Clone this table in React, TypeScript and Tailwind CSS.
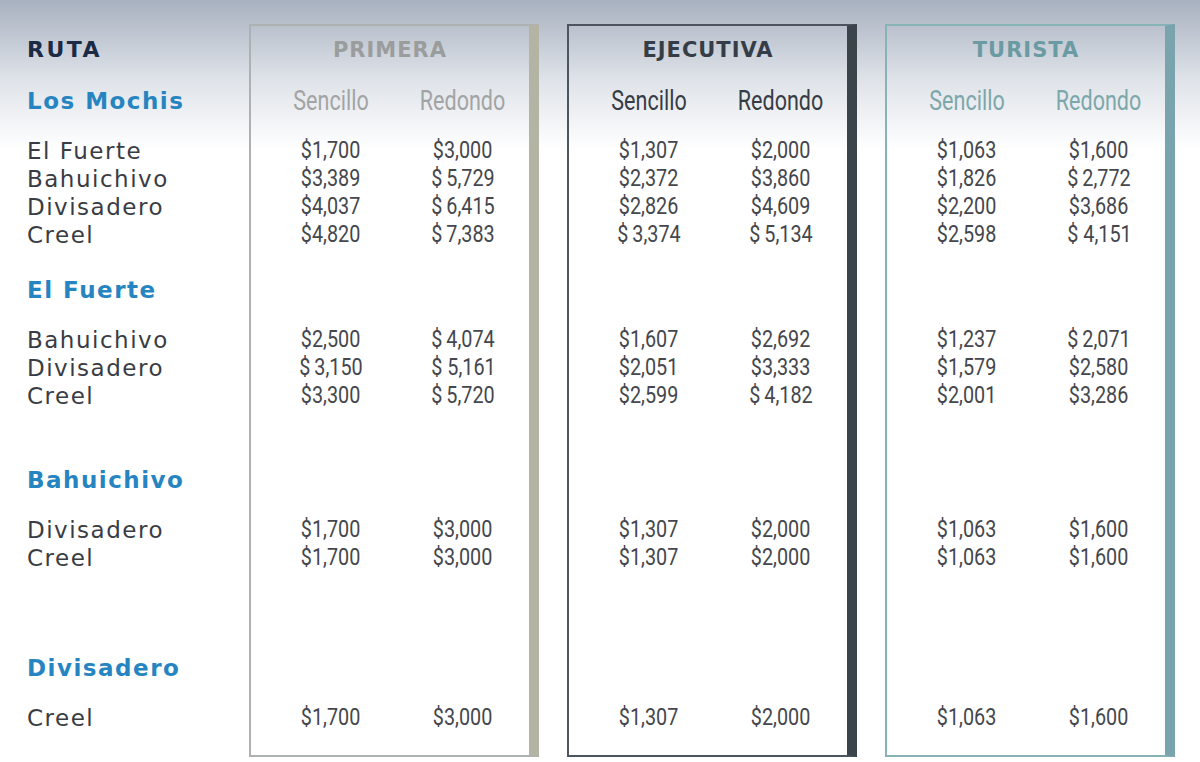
type Pair = [string, string]

interface Row {
  dest: string
  prices: [Pair, Pair, Pair]
}

interface Section {
  name: string
  mt: string
  rows: Row[]
}

const T = '\u2009'

const sections: Section[] = [
  {
    name: 'Los Mochis',
    mt: 'mt-[23px]',
    rows: [
      { dest: 'El Fuerte', prices: [['$1,700', '$3,000'], ['$1,307', '$2,000'], ['$1,063', '$1,600']] },
      { dest: 'Bahuichivo', prices: [['$3,389', `$${T}5,729`], ['$2,372', '$3,860'], ['$1,826', `$${T}2,772`]] },
      { dest: 'Divisadero', prices: [['$4,037', `$${T}6,415`], ['$2,826', '$4,609'], ['$2,200', '$3,686']] },
      { dest: 'Creel', prices: [['$4,820', `$${T}7,383`], [`$${T}3,374`, `$${T}5,134`], ['$2,598', '$ 4,151']] },
    ],
  },
  {
    name: 'El Fuerte',
    mt: 'mt-[27px]',
    rows: [
      { dest: 'Bahuichivo', prices: [['$2,500', `$${T}4,074`], ['$1,607', '$2,692'], ['$1,237', `$${T}2,071`]] },
      { dest: 'Divisadero', prices: [[`$${T}3,150`, '$ 5,161'], ['$2,051', '$3,333'], ['$1,579', '$2,580']] },
      { dest: 'Creel', prices: [['$3,300', `$${T}5,720`], ['$2,599', `$${T}4,182`], ['$2,001', '$3,286']] },
    ],
  },
  {
    name: 'Bahuichivo',
    mt: 'mt-[56px]',
    rows: [
      { dest: 'Divisadero', prices: [['$1,700', '$3,000'], ['$1,307', '$2,000'], ['$1,063', '$1,600']] },
      { dest: 'Creel', prices: [['$1,700', '$3,000'], ['$1,307', '$2,000'], ['$1,063', '$1,600']] },
    ],
  },
  {
    name: 'Divisadero',
    mt: 'mt-[82px]',
    rows: [
      { dest: 'Creel', prices: [['$1,700', '$3,000'], ['$1,307', '$2,000'], ['$1,063', '$1,600']] },
    ],
  },
]

const classes = [
  {
    title: 'PRIMERA',
    box: 'border-[#aeb1b1] border-r-[#b3b4a3]',
    titleColor: 'text-[#9b9d9d]',
    subColor: 'text-[#a2a4a4]',
  },
  {
    title: 'EJECUTIVA',
    box: 'border-[#4d555e] border-r-[#3b434b]',
    titleColor: 'text-[#353d48]',
    subColor: 'text-[#363c44]',
  },
  {
    title: 'TURISTA',
    box: 'border-[#88b3b6] border-r-[#79a3ad]',
    titleColor: 'text-[#6b9ba2]',
    subColor: 'text-[#7ca7ab]',
  },
]

function RouteColumn() {
  return (
    <div className="w-[249px] shrink-0 pt-[12px] pl-[27px] font-['DejaVu_Sans',sans-serif]">
      <div className="h-[28px] leading-[28px] text-[22px] font-bold tracking-[2.5px] text-[#1b2a45]">RUTA</div>
      {sections.map(sec => (
        <div key={sec.name}>
          <div className={`${sec.mt} h-[28px] leading-[28px] text-[23px] font-bold tracking-[1.5px] text-[#2685c1]`}>
            {sec.name}
          </div>
          <div className="mt-[22px]">
            {sec.rows.map(r => (
              <div key={r.dest} className="h-[28px] leading-[28px] text-[23px] tracking-[1.5px] text-[#393c44]">
                {r.dest}
              </div>
            ))}
          </div>
        </div>
      ))}
    </div>
  )
}

function ClassPanel({ idx }: { idx: number }) {
  const c = classes[idx]
  return (
    <div className={`w-[290px] h-[733px] shrink-0 border-2 border-r-[10px] pt-[10px] ${c.box}`}>
      <div className={`h-[28px] leading-[28px] text-center text-[21px] font-bold tracking-[1px] font-['DejaVu_Sans',sans-serif] ${c.titleColor}`}>
        {c.title}
      </div>
      {sections.map((sec, si) => (
        <div key={sec.name}>
          <div className={`${sec.mt} h-[28px] grid grid-cols-[132px_132px] pl-[14px] font-['Roboto',sans-serif] ${c.subColor}`}>
            {si === 0 && (
              <>
                <div className="text-center leading-[28px]">
                  <span className="inline-block text-[28px] scale-x-[0.77]">Sencillo</span>
                </div>
                <div className="text-center leading-[28px]">
                  <span className="inline-block text-[28px] scale-x-[0.77]">Redondo</span>
                </div>
              </>
            )}
          </div>
          <div className="mt-[22px]">
            {sec.rows.map(r => (
              <div key={r.dest} className="h-[28px] grid grid-cols-[132px_132px] pl-[14px] leading-[28px] text-[#45474d] font-['Roboto',sans-serif]">
                <div className="text-center">
                  <span className="inline-block whitespace-pre text-[23px] scale-x-[0.86]">{r.prices[idx][0]}</span>
                </div>
                <div className="text-center">
                  <span className="inline-block whitespace-pre text-[23px] scale-x-[0.86]">{r.prices[idx][1]}</span>
                </div>
              </div>
            ))}
          </div>
        </div>
      ))}
    </div>
  )
}

export default function App() {
  return (
    <div className="w-[1200px] min-h-[762px] pt-[24px] flex bg-[linear-gradient(to_bottom,#a8b1c0_0px,#dfe3e9_80px,#ffffff_150px)]">
      <RouteColumn />
      <div className="flex gap-[28px]">
        <ClassPanel idx={0} />
        <ClassPanel idx={1} />
        <ClassPanel idx={2} />
      </div>
    </div>
  )
}
